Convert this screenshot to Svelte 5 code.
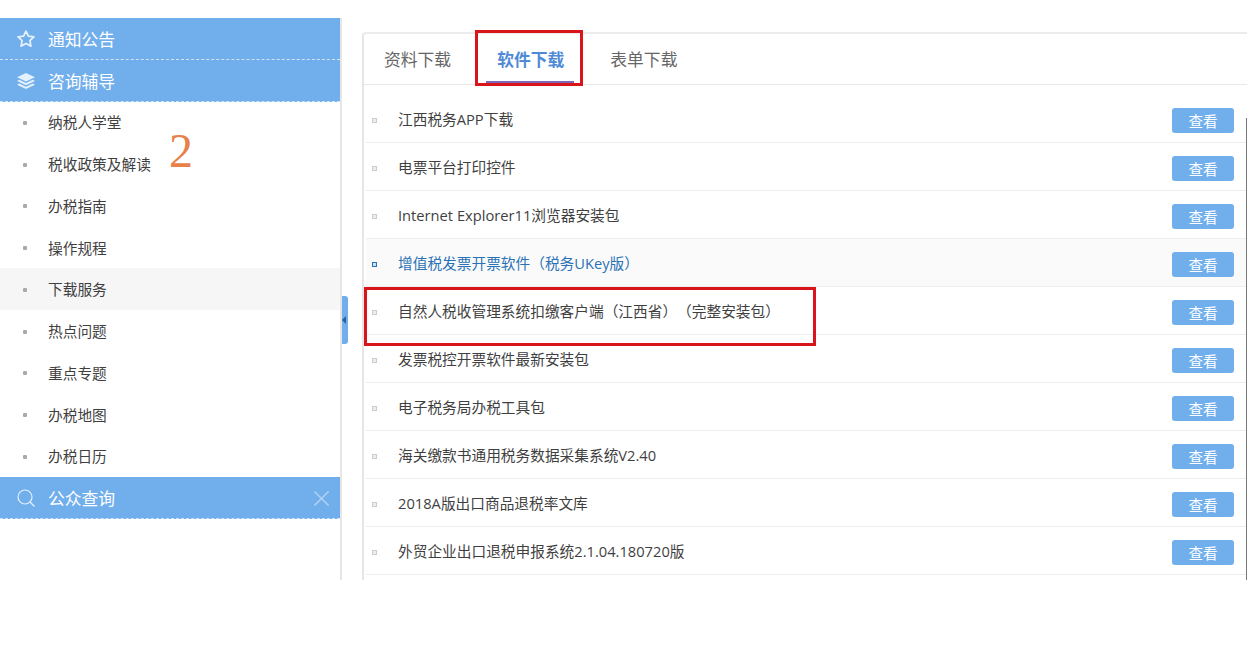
<script>
  const menu = ['纳税人学堂', '税收政策及解读', '办税指南', '操作规程', '下载服务', '热点问题', '重点专题', '办税地图', '办税日历'];
  const tabs = ['资料下载', '软件下载', '表单下载'];
  const files = [
    '江西税务APP下载',
    '电票平台打印控件',
    'Internet Explorer11浏览器安装包',
    '增值税发票开票软件（税务UKey版）',
    '自然人税收管理系统扣缴客户端（江西省）（完整安装包）',
    '发票税控开票软件最新安装包',
    '电子税务局办税工具包',
    '海关缴款书通用税务数据采集系统V2.40',
    '2018A版出口商品退税率文库',
    '外贸企业出口退税申报系统2.1.04.180720版'
  ];
</script>

<div class="page">
  <aside class="sidebar">
    <div class="head">
      <svg class="head-icon" viewBox="0 0 18 18"><path d="M9 1.200l2.400 5 5.500.7-4 3.800 1 5.400L9 13.500l-4.900 2.600 1-5.400-4-3.800 5.500-.7z" fill="none" stroke="currentColor" stroke-width="1.800" stroke-linejoin="round"/></svg>
      <span>通知公告</span>
    </div>
    <div class="head">
      <svg class="head-icon" viewBox="0 0 18 18" fill="currentColor"><path d="M9 1l9 4.300-9 4.300-9-4.300z"/><path d="M2.300 7.800L9 11l6.700-3.200L18 9l-9 4.300L0 9z"/><path d="M2.300 11.500L9 14.700l6.700-3.200 2.300 1.200-9 4.300-9-4.300z"/></svg>
      <span>咨询辅导</span>
    </div>
    <ul class="menu">
      {#each menu as item}
        <li class:current={item === '下载服务'}><i></i>{item}</li>
      {/each}
    </ul>
    <div class="head search">
      <svg class="head-icon" viewBox="0 0 18 18" fill="none" stroke="currentColor" stroke-width="1.200"><circle cx="8" cy="8" r="7"/><path d="M13 13l4.500 4.500"/></svg>
      <span>公众查询</span>
      <svg class="close" viewBox="0 0 18 18" fill="none" stroke="currentColor" stroke-width="1.500"><path d="M1.500 1.500l15 15M16.500 1.500l-15 15"/></svg>
    </div>
    <button class="collapse" aria-label="收起"></button>
  </aside>

  <main class="panel">
    <div class="tabs">
      {#each tabs as tab}
        <span class="tab" class:active={tab === '软件下载'}>{tab}</span>
      {/each}
    </div>
    <ul class="list">
      {#each files as file}
        <li class:hover={file.startsWith('增值税')}>
          <i></i>
          <span class="name">{file}</span>
          <button class="view">查看</button>
        </li>
      {/each}
    </ul>
  </main>

  <div class="mark mark-tab"></div>
  <div class="mark mark-row"></div>
  <div class="number">2</div>
  <div class="scroll-edge"></div>
</div>

<style>
  :global(body) {
    margin: 0;
    background: #fff;
  }

  ul {
    list-style: none;
    margin: 0;
    padding: 0;
  }

  .page {
    position: relative;
    display: flex;
    width: 1247px;
    height: 653px;
    overflow: hidden;
    font-family: "Open Sans", "Noto Sans CJK SC", sans-serif;
    text-spacing-trim: space-all;
    color: #3f3f3f;
  }

  .sidebar {
    position: relative;
    box-sizing: border-box;
    flex: 0 0 342px;
    height: 562px;
    margin-top: 18px;
    border-right: 2px solid #e6e6e6;
  }

  .head {
    display: flex;
    align-items: center;
    box-sizing: border-box;
    height: 42px;
    padding-left: 17px;
    background: #71aeec;
    border-bottom: 1px dashed #cfe3f8;
    color: #fff;
    font-size: 16.8px;
  }

  .search {
    padding-top: 2px;
  }

  .head-icon {
    width: 18px;
    height: 18px;
    margin-right: 13px;
    color: #e4f0fb;
  }

  .close {
    width: 17px;
    height: 17px;
    margin-left: auto;
    margin-right: 10px;
    color: #b5d3f3;
  }

  .menu {
    margin-top: -1px;
  }

  .menu li {
    display: flex;
    align-items: center;
    height: 41.75px;
    padding-left: 23px;
    font-size: 14.7px;
  }

  .menu li.current {
    background: #f6f6f6;
  }

  .menu i {
    width: 4px;
    height: 4px;
    margin: 2px 21px 0 0;
    background: #aaa;
    border-radius: 1px;
  }

  .collapse {
    position: absolute;
    top: 278px;
    right: -8px;
    width: 6px;
    height: 48px;
    padding: 0;
    border: 0;
    border-radius: 0 3px 3px 0;
    background: #71aeec;
  }

  .collapse::after {
    content: "";
    position: absolute;
    top: 20px;
    left: 0;
    border: 4px solid transparent;
    border-left: 0;
    border-right: 4px solid #2a5f9c;
  }

  .panel {
    box-sizing: border-box;
    flex: 1;
    height: 548px;
    margin: 32px 0 0 20px;
    border-top: 2px solid #ececec;
    border-left: 2px solid #e6e6e6;
    border-top-left-radius: 4px;
  }

  .tabs {
    display: flex;
    box-sizing: border-box;
    height: 51px;
    padding-left: 5px;
    border-bottom: 1px solid #e8e8e8;
  }

  .tab {
    position: relative;
    display: flex;
    align-items: center;
    padding: 0 15px;
    margin-right: 16px;
    font-size: 16.8px;
    color: #666;
  }

  .tab.active {
    color: #4f8ad6;
    font-weight: 700;
  }

  .tab.active::after {
    content: "";
    position: absolute;
    left: 4px;
    right: 5px;
    bottom: 1px;
    height: 2px;
    background: #7a68b8;
  }

  .list {
    padding-top: 10px;
    margin-left: 2px;
  }

  .list li {
    display: flex;
    align-items: center;
    box-sizing: border-box;
    height: 48px;
    padding: 0 13px 0 6px;
    border-bottom: 1px solid #eee;
    font-size: 14.7px;
  }

  .list li.hover {
    background: #fafafa;
    color: #2a72b5;
  }

  .list i {
    box-sizing: border-box;
    width: 5px;
    height: 5px;
    margin: 3px 21px 0 0;
    background: #eee;
    border: 1px solid #ccc;
  }

  .list li.hover i {
    border-color: #2a72b5;
    background: #cfe0f0;
  }

  .view {
    width: 62px;
    height: 25px;
    margin: 4px 0 0 auto;
    padding: 0;
    border: 0;
    border-radius: 3px;
    background: #71aeec;
    color: #fff;
    font: inherit;
    font-size: 14.6px;
  }

  .mark {
    position: absolute;
    box-sizing: border-box;
    border: 3px solid #d9141a;
  }

  .mark-tab {
    left: 475px;
    top: 30px;
    width: 108px;
    height: 56px;
  }

  .mark-row {
    left: 364px;
    top: 287px;
    width: 452px;
    height: 59px;
  }

  .number {
    position: absolute;
    left: 169px;
    top: 123px;
    font-family: "Liberation Serif", serif;
    font-size: 48px;
    line-height: 56px;
    color: #e8804a;
  }

  .scroll-edge {
    position: absolute;
    right: 0;
    top: 118px;
    width: 1px;
    height: 462px;
    background: #777;
  }
</style>
